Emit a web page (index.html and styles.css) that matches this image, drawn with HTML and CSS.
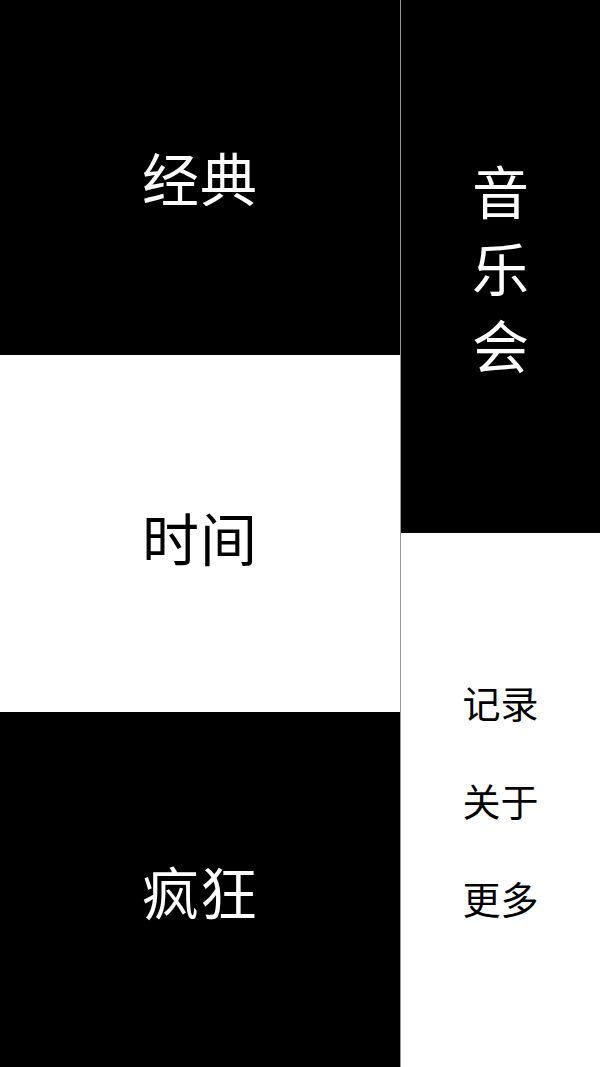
FILE: index.html
```html
<!DOCTYPE html>
<html lang="zh-CN">
<head>
<meta charset="utf-8">
<link rel="stylesheet" href="styles.css">
</head>
<body>
<div class="app">
  <div class="left">
    <div class="tile dark"><span class="big">经典</span></div>
    <div class="tile light"><span class="big">时间</span></div>
    <div class="tile dark"><span class="big">疯狂</span></div>
  </div>
  <div class="divider"></div>
  <div class="right">
    <div class="panel dark">
      <div class="vertical">
        <span>音</span><span>乐</span><span>会</span>
      </div>
    </div>
    <div class="panel light">
      <ul class="menu">
        <li>记录</li>
        <li>关于</li>
        <li>更多</li>
      </ul>
    </div>
  </div>
</div>
</body>
</html>
```

FILE: styles.css
```css
html, body {
  margin: 0;
  padding: 0;
  background: #000;
}
body {
  font-family: "Noto Sans CJK SC", "Noto Sans", sans-serif;
}
.app {
  display: flex;
  width: 600px;
  height: 1067px;
}
.left {
  width: 400px;
  display: grid;
  grid-template-rows: 355px 357px 355px;
}
.divider {
  width: 1px;
  background: #9a9a9a;
}
.right {
  width: 199px;
  display: grid;
  grid-template-rows: 533px 534px;
}
.tile, .panel {
  display: flex;
  align-items: center;
  justify-content: center;
}
.dark {
  background: #000;
  color: #fff;
}
.light {
  background: #fff;
  color: #000;
}
.big {
  font-size: 57px;
  line-height: 1;
  letter-spacing: 1px;
}
.tile.dark:first-child .big {
  margin-top: -2px;
}
.tile.light .big {
  margin-top: 6px;
}
.tile.dark:last-child .big {
  margin-top: 2px;
}
.vertical {
  display: flex;
  flex-direction: column;
  align-items: center;
  gap: 20px;
  font-size: 57px;
  line-height: 57px;
  margin-top: 0;
}
.menu {
  list-style: none;
  margin: 0;
  padding: 0;
  display: flex;
  flex-direction: column;
  align-items: center;
  gap: 60px;
  font-size: 38px;
  line-height: 38px;
}
```
